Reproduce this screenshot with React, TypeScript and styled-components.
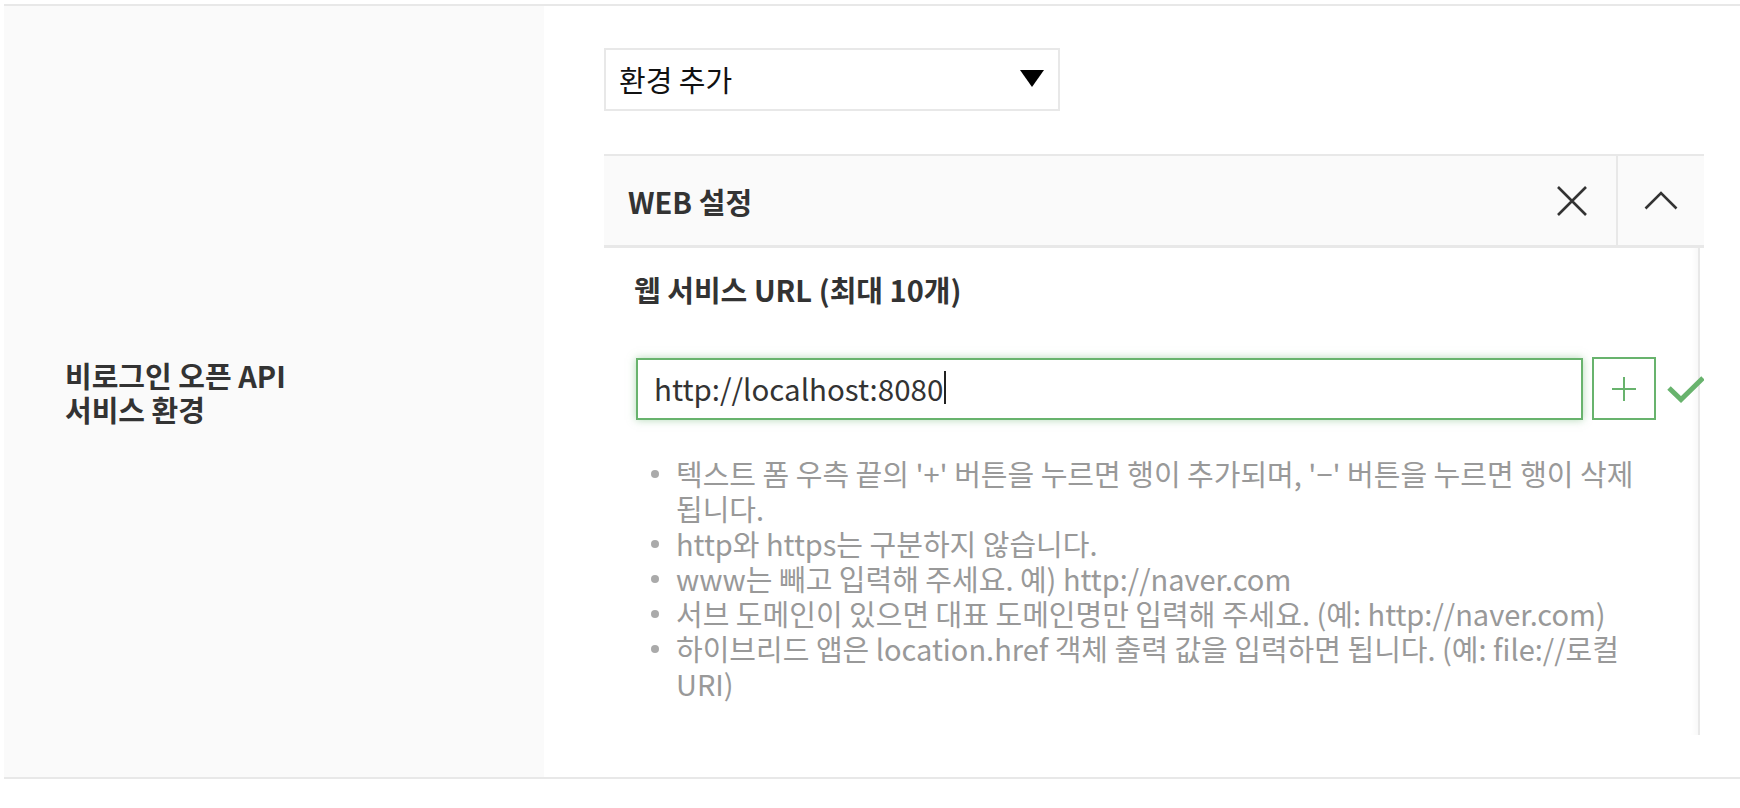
import React from "react";
import styled, { createGlobalStyle } from "styled-components";

const GlobalStyle = createGlobalStyle`
  html, body {
    margin: 0;
    padding: 0;
    background: #ffffff;
  }
  body {
    font-family: "Noto Sans CJK KR", "Noto Sans", sans-serif;
  }
  * {
    box-sizing: border-box;
  }
`;

const GREEN = "#68b36d";

const notes = [
  "텍스트 폼 우측 끝의 '+' 버튼을 누르면 행이 추가되며, '−' 버튼을 누르면 행이 삭제 됩니다.",
  "http와 https는 구분하지 않습니다.",
  "www는 빼고 입력해 주세요. 예) http://naver.com",
  "서브 도메인이 있으면 대표 도메인명만 입력해 주세요. (예: http://naver.com)",
  "하이브리드 앱은 location.href 객체 출력 값을 입력하면 됩니다. (예: file://로컬 URI)",
];

export default function App() {
  return (
    <>
      <GlobalStyle />
      <Page>
        <Row>
          <LabelCell>
            비로그인 오픈 API
            <br />
            서비스 환경
          </LabelCell>
          <ContentCell>
            <Select>
              <span>환경 추가</span>
              <svg width="24" height="17" viewBox="0 0 24 17">
                <polygon points="0,0 24,0 12,17" fill="#000" />
              </svg>
            </Select>

            <Panel>
              <PanelHeader>
                <PanelTitle>WEB 설정</PanelTitle>
                <IconButton>
                  <svg width="30" height="30" viewBox="0 0 30 30">
                    <path d="M1 1 L29 29 M29 1 L1 29" stroke="#333" strokeWidth="2.6" fill="none" />
                  </svg>
                </IconButton>
                <IconButton divider>
                  <svg width="34" height="19" viewBox="0 0 34 19">
                    <path d="M1.5 17.5 L17 2 L32.5 17.5" stroke="#333" strokeWidth="2.6" fill="none" />
                  </svg>
                </IconButton>
              </PanelHeader>

              <PanelBody>
                <SectionTitle>웹 서비스 URL (최대 10개)</SectionTitle>
                <InputRow>
                  <UrlField>
                    http://localhost:8080
                    <Caret />
                  </UrlField>
                  <PlusButton>
                    <svg width="24" height="24" viewBox="0 0 24 24">
                      <path d="M12 0 V24 M0 12 H24" stroke={GREEN} strokeWidth="2" fill="none" />
                    </svg>
                  </PlusButton>
                  <CheckMark width="40" height="28" viewBox="0 0 40 28">
                    <polyline points="2,13 14,24.5 36,3" stroke={GREEN} strokeWidth="5" fill="none" />
                  </CheckMark>
                </InputRow>
                <NoteList>
                  {notes.map((n) => (
                    <Note key={n}>{n}</Note>
                  ))}
                </NoteList>
              </PanelBody>
            </Panel>
          </ContentCell>
        </Row>
      </Page>
    </>
  );
}

const Page = styled.div`
  padding: 4px 0 0 4px;
  width: 1740px;
`;

const Row = styled.div`
  display: grid;
  grid-template-columns: 540px minmax(0, 1fr);
  border-top: 2px solid #e8e8e8;
  border-bottom: 2px solid #e8e8e8;
`;

const LabelCell = styled.div`
  background: #fafafa;
  display: flex;
  flex-direction: column;
  justify-content: center;
  padding-left: 61px;
  font-size: 29px;
  line-height: 34px;
  font-weight: 700;
  color: #333333;
`;

const ContentCell = styled.div`
  padding: 42px 36px 42px 60px;
  min-width: 0;
`;

const Select = styled.div`
  width: 456px;
  height: 63px;
  border: 2px solid #e8e8e8;
  display: flex;
  align-items: center;
  justify-content: space-between;
  padding: 0 14px 2px 13px;
  font-size: 29px;
  color: #111111;
`;

const Panel = styled.div`
  margin-top: 43px;
  overflow: hidden;
`;

const PanelHeader = styled.div`
  display: flex;
  height: 94px;
  background: #fafafa;
  border-top: 2px solid #e8e8e8;
  border-bottom: 3px solid #e8e8e8;
`;

const PanelTitle = styled.div`
  flex: 1;
  display: flex;
  align-items: center;
  padding-left: 24px;
  font-size: 29px;
  font-weight: 700;
  color: #333333;
`;

const IconButton = styled.div<{ divider?: boolean }>`
  width: 88px;
  display: flex;
  align-items: center;
  justify-content: center;
  border-left: ${(props) => (props.divider ? "2px solid #e8e8e8" : "none")};
  cursor: pointer;
`;

const PanelBody = styled.div`
  width: calc(100% - 4px);
  height: 487px;
  padding: 24px 30px 0 30px;
  box-shadow: inset -2px 0 0 #e8e8e8, inset -10px 0 8px -8px rgba(0, 0, 0, 0.06);
`;

const SectionTitle = styled.div`
  font-size: 29px;
  line-height: 34px;
  font-weight: 700;
  color: #333333;
`;

const InputRow = styled.div`
  display: flex;
  align-items: center;
  margin-top: 51px;
  padding-left: 2px;

  > * {
    flex-shrink: 0;
  }
`;

const UrlField = styled.div`
  width: 947px;
  height: 62px;
  border: 2px solid ${GREEN};
  box-shadow: 0 0 8px rgba(104, 179, 109, 0.5);
  padding: 0 16px 2px;
  display: flex;
  align-items: center;
  font-size: 29.5px;
  color: #333333;
  background: #ffffff;
  white-space: nowrap;
`;

const Caret = styled.span`
  display: inline-block;
  width: 2px;
  height: 33px;
  margin-left: 1px;
  background: #222222;
`;

const PlusButton = styled.div`
  width: 64px;
  height: 63px;
  margin-left: 9px;
  border: 2px solid ${GREEN};
  display: flex;
  align-items: center;
  justify-content: center;
  background: #ffffff;
`;

const CheckMark = styled.svg`
  margin-left: 11px;
`;

const NoteList = styled.ul`
  list-style: none;
  margin: 36px 0 0 0;
  padding: 0 0 0 42px;
`;

const Note = styled.li`
  position: relative;
  font-size: 29px;
  line-height: 35px;
  color: #999999;
  word-break: keep-all;

  &::before {
    content: "";
    position: absolute;
    left: -25px;
    top: 14px;
    width: 8px;
    height: 8px;
    border-radius: 50%;
    background: #aaaaaa;
  }
`;
